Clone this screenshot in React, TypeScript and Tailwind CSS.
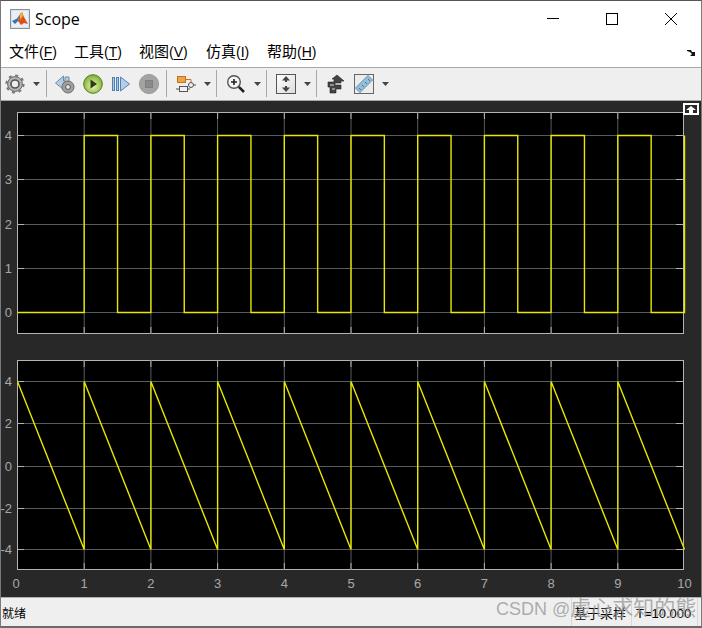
import React from "react";

const X_TICKS = [0, 1, 2, 3, 4, 5, 6, 7, 8, 9, 10];
const PLOT_W = 667;
const px = (t: number) => 0.5 + (t * PLOT_W) / 10;

function squarePoints(top: number, bottom: number) {
  const pts: string[] = [`${px(0)},${bottom}`];
  for (let i = 1; i < 10; i++) {
    pts.push(`${px(i)},${bottom}`, `${px(i)},${top}`, `${px(i + 0.5)},${top}`, `${px(i + 0.5)},${bottom}`);
  }
  pts.push(`${px(10)},${bottom}`, `${px(10)},${top}`);
  return pts.join(" ");
}

function sawPoints(top: number, bottom: number) {
  const pts: string[] = [];
  for (let i = 0; i < 10; i++) {
    pts.push(`${px(i)},${top}`, `${px(i + 1)},${bottom}`);
  }
  return pts.join(" ");
}

function Plot({
  height,
  yTicks,
  line,
  showX,
}: {
  height: number;
  yTicks: { label: string; y: number }[];
  line: string;
  showX?: boolean;
}) {
  const total = height + (showX ? 27 : 0);
  return (
    <svg width={702} height={total} viewBox={`-17 0 702 ${total}`} className="block">
      <rect x={0.5} y={0.5} width={PLOT_W - 1} height={height - 1} fill="#000" stroke="#b4b4b4" />
      {X_TICKS.slice(1, -1).map((t) => (
        <line key={t} x1={px(t)} x2={px(t)} y1={0} y2={height} stroke="#5a5a5a" />
      ))}
      {yTicks.map((t) => (
        <line key={t.label} x1={0} x2={PLOT_W - 1} y1={t.y + 0.5} y2={t.y + 0.5} stroke="#5a5a5a" />
      ))}
      {X_TICKS.slice(1, -1).map((t) => (
        <g key={t} stroke="#b4b4b4">
          <line x1={px(t)} x2={px(t)} y1={0} y2={7} />
          <line x1={px(t)} x2={px(t)} y1={height - 7} y2={height} />
        </g>
      ))}
      {yTicks.map((t) => (
        <g key={t.label} stroke="#b4b4b4">
          <line x1={0} x2={7} y1={t.y + 0.5} y2={t.y + 0.5} />
          <line x1={PLOT_W - 8} x2={PLOT_W - 1} y1={t.y + 0.5} y2={t.y + 0.5} />
          <text
            x={-5}
            y={t.y + 5}
            textAnchor="end"
            fontSize={13}
            fill="#a8a8a8"
            stroke="none"
            fontFamily="'Liberation Sans', sans-serif"
          >
            {t.label}
          </text>
        </g>
      ))}
      <polyline points={line} fill="none" stroke="#e8e800" strokeWidth={1.4} />
      {showX &&
        X_TICKS.map((t) => (
          <text
            key={t}
            x={t === 0 ? -1 : px(t)}
            y={height + 18}
            textAnchor="middle"
            fontSize={13}
            fill="#a8a8a8"
            fontFamily="'Liberation Sans', sans-serif"
          >
            {t}
          </text>
        ))}
    </svg>
  );
}

function MatlabLogo() {
  return (
    <svg width={20} height={20} viewBox="0 0 20 20">
      <rect x={0.5} y={0.5} width={19} height={19} fill="#c9d6e4" stroke="#8a8f96" />
      <rect x={1.5} y={1.5} width={17} height={17} fill="#e9eff5" />
      <path d="M2 12 L7 9.5 L10 5 L8 12 L5 15 Z" fill="#2f78b4" />
      <path d="M10 5 L12 3 L14 8 L18 15 L14 14 L11 16 L8 12 Z" fill="#d9531a" />
      <path d="M10 5 L12 3 L13 7 L10 11 Z" fill="#f2b134" />
    </svg>
  );
}

function Menu({ name, hot, width }: { name: string; hot: string; width: number }) {
  return (
    <span className="block whitespace-nowrap" style={{ width }}>
      <span className="text-[15px]">{name}</span>(<span className="underline underline-offset-2">{hot}</span>)
    </span>
  );
}

function Caret() {
  return (
    <svg width={7} height={4} viewBox="0 0 7 4" className="shrink-0">
      <path d="M0 0H7L3.5 4Z" fill="#444" />
    </svg>
  );
}

function Sep({ className }: { className: string }) {
  return <div className={`w-px h-[27px] bg-[#a8a8a8] shrink-0 ${className}`} />;
}

function GearIcon() {
  return (
    <svg width={20} height={20} viewBox="0 0 20 20">
      <circle cx={10} cy={10} r={7.4} fill="#b4b4b4" stroke="#666" strokeWidth={1} />
      <circle cx={10} cy={10} r={8.6} fill="none" stroke="#777" strokeWidth={2} strokeDasharray="3 3.75" />
      <circle cx={10} cy={10} r={4} fill="#ececec" stroke="#555" strokeWidth={1.6} />
    </svg>
  );
}

function BackIcon() {
  return (
    <svg width={20} height={20} viewBox="0 0 20 20">
      <path d="M0.5 9 L8.5 2 V7 H10 V3 H14 V8 H9 V16 Z" fill="#b5cce2" stroke="#6d8cab" />
      <circle cx={13} cy={13} r={6} fill="#a0a0a0" stroke="#6a6a6a" />
      <circle cx={13} cy={13} r={2.4} fill="#e8e8e8" stroke="#555" />
    </svg>
  );
}

function PlayIcon() {
  return (
    <svg width={20} height={20} viewBox="0 0 20 20">
      <defs>
        <radialGradient id="play" cx="50%" cy="60%" r="60%">
          <stop offset="0%" stopColor="#eaf6b4" />
          <stop offset="100%" stopColor="#79ad2c" />
        </radialGradient>
      </defs>
      <circle cx={10} cy={10} r={9.3} fill="url(#play)" stroke="#4f7a1e" />
      <path d="M7.5 5.5 L14 10 L7.5 14.5 Z" fill="#2c3a18" />
    </svg>
  );
}

function StepIcon() {
  return (
    <svg width={20} height={20} viewBox="0 0 20 20">
      <rect x={1.5} y={3.5} width={2} height={13} fill="#a9c4de" stroke="#4f81b5" />
      <rect x={5.5} y={3.5} width={2} height={13} fill="#a9c4de" stroke="#4f81b5" />
      <path d="M9.5 3 L18.5 10 L9.5 17 Z" fill="#b7cfe6" stroke="#4f81b5" />
    </svg>
  );
}

function StopIcon() {
  return (
    <svg width={20} height={20} viewBox="0 0 20 20">
      <circle cx={10} cy={10} r={9.6} fill="#a3a3a3" stroke="#9a9a9a" />
      <rect x={6.5} y={6.5} width={7} height={7} fill="#8a8a8a" stroke="#808080" />
    </svg>
  );
}

function ConfigIcon() {
  return (
    <svg width={20} height={20} viewBox="0 0 20 20">
      <rect x={1.5} y={2.5} width={8} height={6} fill="#eda34a" stroke="#c8741c" />
      <rect x={3.5} y={12.5} width={8} height={5} fill="#f2f2f2" stroke="#555" />
      <path d="M9.5 5.5 H15 V9" fill="none" stroke="#c8741c" />
      <circle cx={15} cy={11} r={2.5} fill="#eee" stroke="#555" />
      <path d="M11.5 15 H14 M15 13.5 V14 M17.5 11 H20 M0 15 H3.5" fill="none" stroke="#555" />
    </svg>
  );
}

function ZoomIcon() {
  return (
    <svg width={20} height={20} viewBox="0 0 20 20">
      <circle cx={8} cy={8} r={6.3} fill="#f6f6f6" stroke="#555" strokeWidth={1.4} />
      <path d="M5 8 H11 M8 5 V11" stroke="#222" strokeWidth={1.6} />
      <path d="M12.8 12.8 L18 18" stroke="#222" strokeWidth={2.6} />
    </svg>
  );
}

function FitIcon() {
  return (
    <svg width={20} height={20} viewBox="0 0 20 20">
      <defs>
        <linearGradient id="fit" x1="0" y1="0" x2="1" y2="1">
          <stop offset="0%" stopColor="#ffffff" />
          <stop offset="100%" stopColor="#dcdcdc" />
        </linearGradient>
      </defs>
      <rect x={0.5} y={0.5} width={19} height={19} fill="url(#fit)" stroke="#555" />
      <path d="M10 2 L14 6.5 H11 V8 H9 V6.5 H6 Z" fill="#444" />
      <path d="M10 18 L14 13.5 H11 V12 H9 V13.5 H6 Z" fill="#444" />
    </svg>
  );
}

function CursorIcon() {
  return (
    <svg width={20} height={20} viewBox="0 0 20 20">
      <path d="M11 1 L18 7 H15 V9 H9 V11 H15 V15 H10 V19 H4 V13 H2 V8 H8 V5 H6 Z" fill="#444" stroke="#222" strokeWidth={0.6} />
      <path d="M4 11 H8 M6 15 H9" stroke="#ddd" />
    </svg>
  );
}

function RulerIcon() {
  return (
    <svg width={20} height={20} viewBox="0 0 20 20">
      <rect x={0.5} y={0.5} width={19} height={19} fill="#ececec" stroke="#666" />
      <path d="M1.5 14 L14 1.5 L18.5 6 L6 18.5 Z" fill="#8fc0de" stroke="#6d8fa5" />
      <path d="M5 14 L7 16 M8 11 L10 13 M11 8 L13 10 M14 5 L16 7" stroke="#3f6f8f" />
    </svg>
  );
}

export default function App() {
  return (
    <div className="w-[702px] h-[628px] relative flex flex-col bg-white border-x border-t border-b-2 border-x-[#7a7a7a] border-t-[#555] border-b-[#6a6a6a] overflow-hidden font-['Liberation_Sans','Noto_Sans_CJK_SC',sans-serif] text-black">
      {/* title bar */}
      <div className="h-[35px] flex items-center shrink-0">
        <div className="ml-[9px] mr-[5px] mt-[1px]">
          <MatlabLogo />
        </div>
        <span className="text-[16px] font-['Open_Sans',sans-serif] mt-px">Scope</span>
        <div className="ml-auto flex items-center mr-[1px]">
          <div className="w-[59px] flex justify-center">
            <div className="w-3 h-px bg-black" />
          </div>
          <div className="w-[59px] flex justify-center">
            <div className="w-3 h-3 border border-black" />
          </div>
          <div className="w-[59px] flex justify-center">
            <svg width={12} height={12} viewBox="0 0 12 12">
              <path d="M0 0L12 12M12 0L0 12" stroke="#000" />
            </svg>
          </div>
        </div>
      </div>

      {/* menu bar */}
      <div className="h-[31px] flex items-center pl-2 pr-[5px] text-[14px] shrink-0">
        <div className="flex items-center mt-[2px]">
          <Menu name="文件" hot="F" width={65} />
          <Menu name="工具" hot="T" width={65} />
          <Menu name="视图" hot="V" width={67} />
          <Menu name="仿真" hot="I" width={61} />
          <Menu name="帮助" hot="H" width={60} />
        </div>
        <svg width={10} height={8} viewBox="0 0 10 8" className="ml-auto mb-[-3px]">
          <path d="M1 1 L5 1 L6 3 L9 3 L9 7 L4 7 L6 5 L4 3 L1 2Z" fill="#111" />
        </svg>
      </div>

      {/* toolbar */}
      <div className="h-[34px] flex items-center gap-2 pl-[4px] pb-px bg-[#efefef] border-y border-[#a8a8a8] shrink-0">
        <GearIcon />
        <Caret />
        <Sep className="ml-[-2px]" />
        <BackIcon />
        <PlayIcon />
        <StepIcon />
        <StopIcon />
        <Sep className="ml-[-1px] mr-px" />
        <ConfigIcon />
        <Caret />
        <Sep className="ml-[-3px] mr-px" />
        <ZoomIcon />
        <Caret />
        <Sep className="ml-[-3px] mr-px" />
        <FitIcon />
        <Caret />
        <Sep className="ml-[-3px] mr-px" />
        <CursorIcon />
        <RulerIcon />
        <Caret />
      </div>

      {/* plots */}
      <div className="relative flex-1 bg-[#282828] pt-[11px] -ml-px">
        <Plot
          height={222}
          yTicks={[
            { label: "4", y: 23 },
            { label: "3", y: 67 },
            { label: "2", y: 112 },
            { label: "1", y: 156 },
            { label: "0", y: 200 },
          ]}
          line={squarePoints(23.5, 200.5)}
        />
        <div className="h-[26px]" />
        <Plot
          height={210}
          showX
          yTicks={[
            { label: "4", y: 21 },
            { label: "2", y: 63 },
            { label: "0", y: 106 },
            { label: "-2", y: 148 },
            { label: "-4", y: 189 },
          ]}
          line={sawPoints(21.5, 189.5)}
        />
        <div className="absolute right-[2px] top-[2px] w-[16px] h-[12px] bg-[#282828] border-2 border-white flex items-center justify-center">
          <svg width={10} height={7} viewBox="0 0 10 7">
            <path d="M5 0 L10 4 H7 V7 H3 V4 H0 Z" fill="#fff" />
          </svg>
        </div>
      </div>

      {/* status bar */}
      <div className="h-[29px] flex items-center bg-[#efefef] border-t border-[#b0b0b0] text-[12px] pr-[3px] shrink-0">
        <span className="pl-px pt-[3px] text-[12px]">就绪</span>
        <div className="ml-auto h-full w-[60px] border-l border-[#d8d8d8] flex items-center pl-[2px] pt-[3px] text-[13px]">基于采样</div>
        <div className="h-full w-[67px] border-x border-[#d8d8d8] flex items-center pl-[4px] pt-[3px] text-[13px] whitespace-nowrap">T=10.000</div>
      </div>

      {/* watermark */}
      <div className="absolute left-[495px] top-[595px] text-[18px] leading-[24px] text-[#9a9a9a]/80 whitespace-nowrap">
        CSDN @<span className="text-[21px]">虚心求知的熊</span>
      </div>
    </div>
  );
}
